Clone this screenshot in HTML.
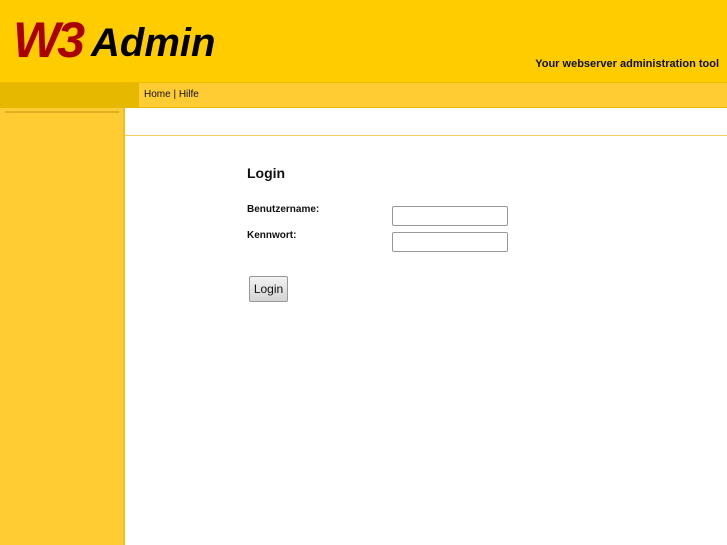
<!DOCTYPE html>
<html><head><style>
body{margin:0;width:727px;height:545px;overflow:hidden;background:#fff;font-family:"Liberation Sans",sans-serif;position:relative}
div{position:absolute;box-sizing:border-box}
</style></head><body>
<div style="left:0;top:0;width:727px;height:83px;background:#ffcc00;border-bottom:1px solid #eebb00"></div>
<div style="left:13px;top:12px;font-size:50px;font-weight:bold;font-style:italic;color:#aa0000;letter-spacing:-3px;line-height:56px">W3</div>
<div style="left:91px;top:18px;font-size:40px;font-weight:bold;font-style:italic;color:#000;line-height:50px;letter-spacing:0px">Admin</div>
<div style="left:400px;top:58px;width:319px;text-align:right;font-size:11px;font-weight:bold;color:#111">Your webserver administration tool</div>
<div style="left:0;top:83px;width:139px;height:25px;background:#e6b800"></div>
<div style="left:139px;top:83px;width:588px;height:25px;background:#ffcc33;border-bottom:1px solid #e8b800"></div>
<div style="left:144px;top:89px;font-size:10px;color:#111">Home | Hilfe</div>
<div style="left:0;top:108px;width:125px;height:437px;background:#ffcc33;border-right:2px solid #f0c020"></div>
<div style="left:5px;top:111px;width:114px;height:2px;background:#e0b020"></div>
<div style="left:125px;top:135px;width:602px;height:1px;background:#f0d060"></div>
<div style="left:247px;top:165px;font-size:14px;font-weight:bold;color:#111">Login</div>
<div style="left:247px;top:204px;font-size:10px;font-weight:bold;color:#111">Benutzername:</div>
<div style="left:247px;top:230px;font-size:10px;font-weight:bold;color:#111">Kennwort:</div>
<div style="left:392px;top:206px;width:116px;height:20px;border:1px solid #999;border-radius:2px;background:#fff"></div>
<div style="left:392px;top:232px;width:116px;height:20px;border:1px solid #999;border-radius:2px;background:#fff"></div>
<div style="left:249px;top:276px;width:39px;height:26px;border:1px solid #999;border-radius:2px;background:linear-gradient(#f2f2f2,#d4d4d4);font-size:12px;text-align:center;line-height:24px;color:#111">Login</div>
</body></html>
